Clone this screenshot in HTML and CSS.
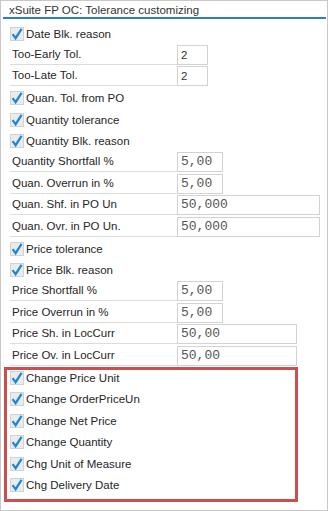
FILE: index.html
```html
<!DOCTYPE html>
<html lang="en">

<head>
  <meta charset="utf-8">
  <title>xSuite FP OC: Tolerance customizing</title>
  <link rel="stylesheet" href="styles.css">
</head>

<body>
  <svg class="defs" width="0" height="0">
    <symbol id="chk" viewBox="0 0 14 14">
      <rect x="0.5" y="0.5" width="13" height="13" fill="#ebebeb" stroke="#d2d2d2" />
      <path d="M2.6 7.2 L5.6 11.2 L11.6 1.8" fill="none" stroke="#1b87d6" stroke-width="2.2" />
    </symbol>
  </svg>
  <div class="window">
    <div class="title">xSuite FP OC: Tolerance customizing</div>
    <div class="form">
      <div class="row check-row"><svg class="cb"><use href="#chk" /></svg><span>Date Blk. reason</span></div>
      <div class="row"><span class="lbl">Too-Early Tol.</span><span class="inp num w-xs">2</span></div>
      <div class="row"><span class="lbl">Too-Late Tol.</span><span class="inp num w-xs">2</span></div>
      <div class="row check-row"><svg class="cb"><use href="#chk" /></svg><span>Quan. Tol. from PO</span></div>
      <div class="row check-row"><svg class="cb"><use href="#chk" /></svg><span>Quantity tolerance</span></div>
      <div class="row check-row"><svg class="cb"><use href="#chk" /></svg><span>Quantity Blk. reason</span></div>
      <div class="row"><span class="lbl">Quantity Shortfall %</span><span class="inp mono w-sm">5,00</span></div>
      <div class="row"><span class="lbl">Quan. Overrun in %</span><span class="inp mono w-sm">5,00</span></div>
      <div class="row"><span class="lbl">Quan. Shf. in PO Un</span><span class="inp mono w-lg">50,000</span></div>
      <div class="row"><span class="lbl">Quan. Ovr. in PO Un.</span><span class="inp mono w-lg">50,000</span></div>
      <div class="row check-row"><svg class="cb"><use href="#chk" /></svg><span>Price tolerance</span></div>
      <div class="row check-row"><svg class="cb"><use href="#chk" /></svg><span>Price Blk. reason</span></div>
      <div class="row"><span class="lbl">Price Shortfall %</span><span class="inp mono w-sm">5,00</span></div>
      <div class="row"><span class="lbl">Price Overrun in %</span><span class="inp mono w-sm">5,00</span></div>
      <div class="row"><span class="lbl">Price Sh. in LocCurr</span><span class="inp mono w-md">50,00</span></div>
      <div class="row"><span class="lbl">Price Ov. in LocCurr</span><span class="inp mono w-md">50,00</span></div>
      <div class="highlight">
        <div class="row check-row"><svg class="cb"><use href="#chk" /></svg><span>Change Price Unit</span></div>
        <div class="row check-row"><svg class="cb"><use href="#chk" /></svg><span>Change OrderPriceUn</span></div>
        <div class="row check-row"><svg class="cb"><use href="#chk" /></svg><span>Change Net Price</span></div>
        <div class="row check-row"><svg class="cb"><use href="#chk" /></svg><span>Change Quantity</span></div>
        <div class="row check-row"><svg class="cb"><use href="#chk" /></svg><span>Chg Unit of Measure</span></div>
        <div class="row check-row"><svg class="cb"><use href="#chk" /></svg><span>Chg Delivery Date</span></div>
      </div>
    </div>
  </div>
</body>

</html>
```

FILE: styles.css
```css
html,
body {
  margin: 0;
  padding: 0;
  background: #fff;
}

body {
  font-family: "Liberation Sans", Arial, sans-serif;
  font-size: 11.5px;
  color: #262626;
}

.defs {
  position: absolute;
  width: 0;
  height: 0;
  overflow: hidden;
}

.window {
  width: 328px;
  height: 511px;
  box-sizing: border-box;
  border: 1px solid #c8c8c8;
}

.title {
  margin: 2px 1px 0 2px;
  padding-left: 6px;
  height: 14px;
  line-height: 14px;
  font-size: 11.5px;
  color: #333;
  border-bottom: 2px solid #2b7cc9;
}

.form {
  padding: 4px 0 0 9px;
}

.row {
  height: 21.5px;
  display: flex;
  align-items: flex-start;
}

.check-row {
  align-items: center;
}

.cb {
  width: 14px;
  height: 14px;
  margin-right: 2px;
  flex: none;
}

.lbl {
  width: 167px;
  height: 20px;
  box-sizing: border-box;
  padding-left: 2px;
  line-height: 19px;
  border-bottom: 1px solid #dcdcdc;
  white-space: nowrap;
}

.inp {
  height: 20px;
  box-sizing: border-box;
  border: 1px solid #d2d2d2;
  padding-left: 3px;
  line-height: 18px;
  background: #fff;
}

.num {
  color: #333;
}

.mono {
  font-family: "Liberation Mono", "Courier New", monospace;
  font-size: 13px;
  color: #555;
}

.w-xs {
  width: 31px;
}

.w-sm {
  width: 46px;
}

.w-md {
  width: 120px;
}

.w-lg {
  width: 143px;
}

/* red frame round the change flags */
.highlight {
  margin-left: -6px;
  width: 294px;
  box-sizing: border-box;
  border: 3px solid #c9504f;
  padding: 0 0 3px 3px;
}

.highlight .row:first-child {
  margin-top: -3px;
}
```
